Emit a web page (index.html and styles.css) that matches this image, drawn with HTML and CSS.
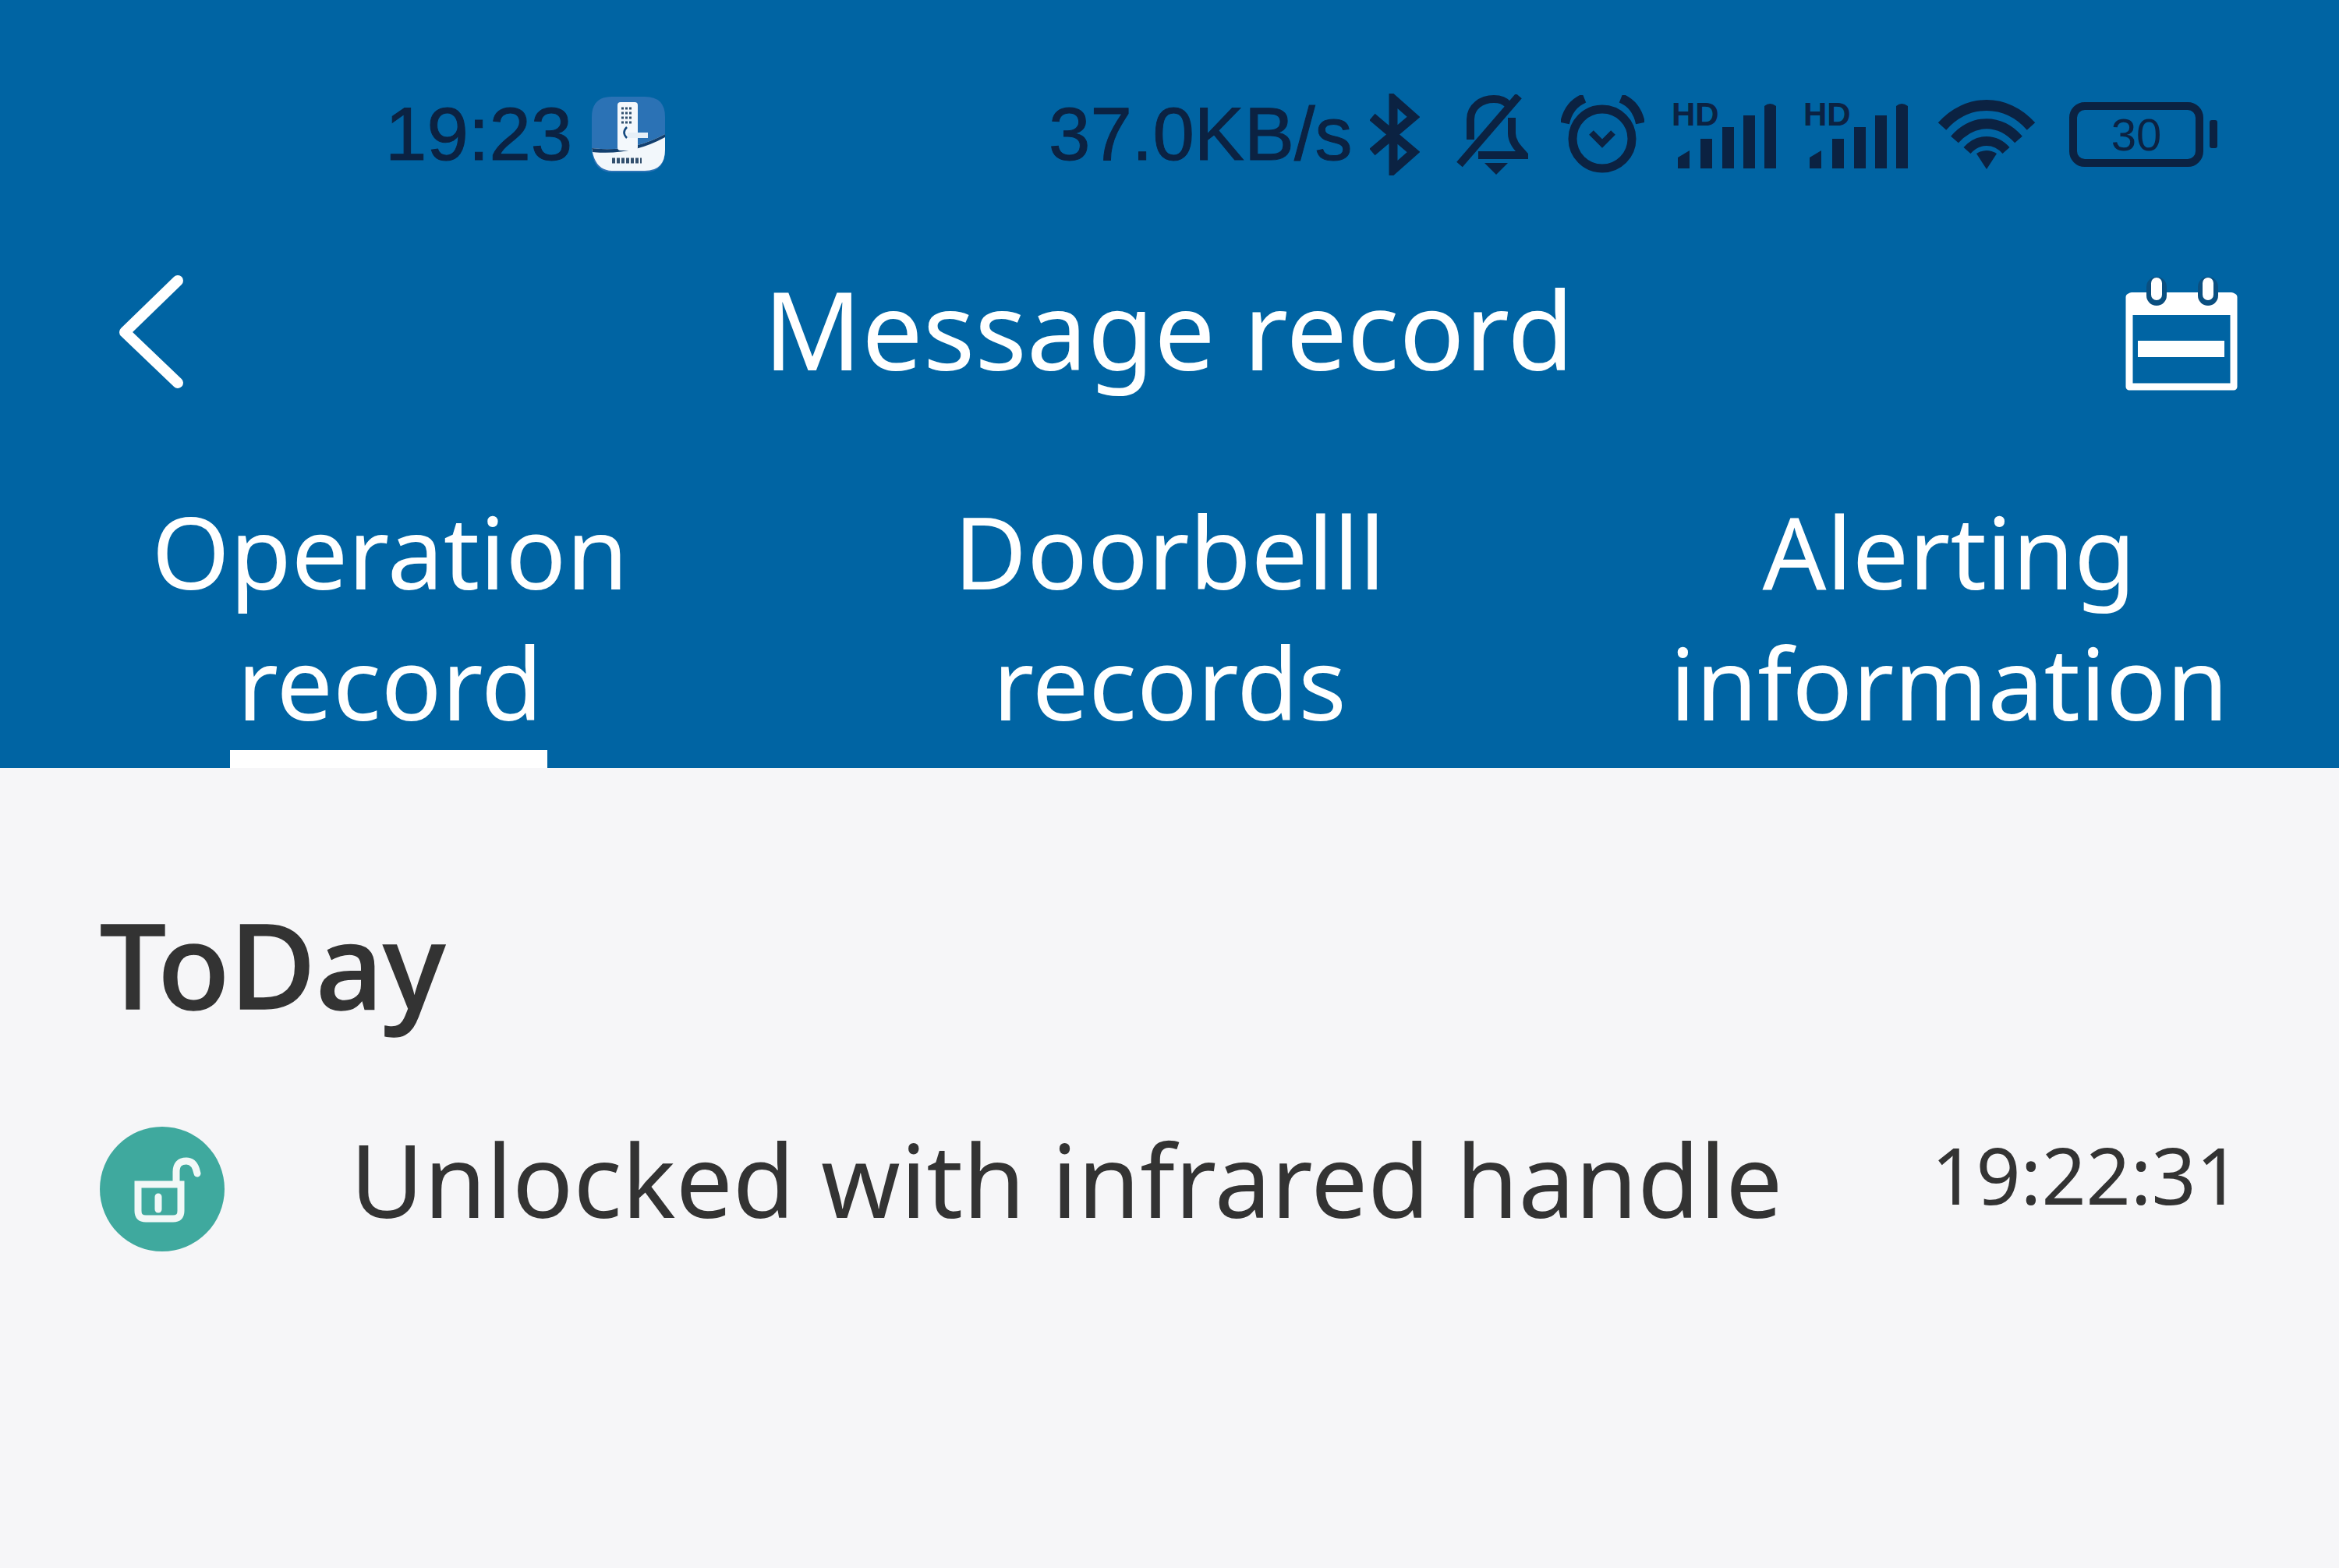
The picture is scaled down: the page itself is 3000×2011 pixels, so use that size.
FILE: index.html
```html
<!DOCTYPE html>
<html>

<head>
   <meta name="viewport" content="width=device-width, initial-scale=1.0">
   <title>Message record</title>
   <link rel="stylesheet" href="styles.css">
</head>

<body>
   <div class="top">
      <div class="status-bar">
         <span class="clock">19:23</span>
         <svg class="app-icon" viewBox="0 0 94 97">
            <path d="M26 0H68Q94 0 94 26V68Q94 97 68 97H26Q2 97 0 68V26Q0 0 26 0Z" fill="#2b72b5" />
            <path d="M0 66Q50 72 94 48V68Q94 95 68 95H26Q4 95 0 66Z" fill="#f2f7fb" />
            <path d="M0 66Q50 72 94 48V52Q50 76 1 71Z" fill="#123f6e" />
            <rect x="33" y="7" width="26" height="62" rx="4" fill="#f4f8fc" />
            <rect x="46" y="46" width="26" height="7" fill="#e6eff7" />
            <path d="M45 39Q38 46 45 53" fill="none" stroke="#154a80" stroke-width="2.5" />
            <path d="M38 15h14M38 21h14M38 27h14M38 33h14" stroke="#30506f" stroke-width="3" stroke-dasharray="3 2" />
            <path d="M26 82h38" stroke="#33506e" stroke-width="7" stroke-dasharray="4 2" />
         </svg>
         <span class="speed">37.0KB/s</span>
         <svg class="ic-bt" viewBox="0 0 64 105" fill="none" stroke="#0b2242" stroke-width="11">
            <path d="M3 30L56 75L30 98V7L56 30L3 75" />
         </svg>
         <svg class="ic-bell" viewBox="0 0 92 103" fill="none" stroke="#0b2242" stroke-width="10">
            <path d="M18 58V32C18 16 32 6 48 6C56 6 62 8 66 13" />
            <path d="M71 30V50C71 62 80 70 87 78H28" />
            <path d="M80 2L4 90" />
            <path d="M36 88H66L51 103Z" fill="#0b2242" stroke="none" />
         </svg>
         <svg class="ic-alarm" viewBox="0 0 107 100" fill="none" stroke="#0b2242" stroke-width="11">
            <circle cx="53" cy="56" r="38" />
            <path d="M30 4Q10 12 5 36" stroke-width="12" />
            <path d="M77 4Q97 12 102 36" stroke-width="12" />
            <path d="M39 48L53 62L67 48" stroke-width="8" />
         </svg>
         <svg class="ic-signal" viewBox="0 -10 134 109">
            <text x="0" y="33" class="hd">HD</text>
            <path d="M8 74L23 65V88H8Z M37 50H52V88H37Z M65 35H80V88H65Z M92 20H107V88H92Z M119 8Q126 2 134 8V88H119Z" fill="#0b2242" />
         </svg>
         <svg class="ic-signal sim2" viewBox="0 -10 134 109">
            <text x="0" y="33" class="hd">HD</text>
            <path d="M8 74L23 65V88H8Z M37 50H52V88H37Z M65 35H80V88H65Z M92 20H107V88H92Z M119 8Q126 2 134 8V88H119Z" fill="#0b2242" />
         </svg>
         <svg class="ic-wifi" viewBox="0 0 126 90" fill="none" stroke="#0b2242">
            <path d="M6 35C38 -1 88 -1 120 35" stroke-width="14" />
            <path d="M22 52C46 25 80 25 104 52" stroke-width="13" />
            <path d="M38 66C52 50 74 50 88 66" stroke-width="12" />
            <path d="M50 70Q63 62 76 70L63 90Z" fill="#0b2242" stroke="none" />
         </svg>
         <div class="battery">
            <span class="battery-level">30</span>
            <span class="battery-tip"></span>
         </div>
      </div>

      <div class="app-bar">
         <svg class="back" viewBox="0 0 82 145" fill="none" stroke="#fff" stroke-width="14" stroke-linecap="round" stroke-linejoin="round">
            <path d="M75 7L7 73L75 138" />
         </svg>
         <h1 class="title">Message record</h1>
         <svg class="calendar" viewBox="0 0 146 147">
            <path d="M6 26H140V141H6Z" fill="none" stroke="#fff" stroke-width="9" stroke-linejoin="round" />
            <rect x="3" y="20" width="140" height="29" rx="6" fill="#fff" />
            <rect x="17" y="82" width="111" height="21" fill="#fff" />
            <rect x="28" y="0" width="26" height="37" rx="13" fill="#0a4f80" />
            <rect x="94" y="0" width="26" height="37" rx="13" fill="#0a4f80" />
            <rect x="34" y="1" width="14" height="29" rx="7" fill="#fff" />
            <rect x="100" y="1" width="14" height="29" rx="7" fill="#fff" />
         </svg>
      </div>

      <div class="tabs">
         <div class="tab active">Operation<br>record</div>
         <div class="tab">Doorbelll<br>records</div>
         <div class="tab">Alerting<br>information</div>
      </div>
   </div>

   <div class="content">
      <h2 class="day">ToDay</h2>
      <div class="record">
         <svg class="record-icon" viewBox="0 0 160 160">
            <circle cx="80" cy="80" r="80" fill="#3fa99e" />
            <g fill="none" stroke="#f2f8f7" stroke-width="9" stroke-linecap="round">
               <path d="M49 74H104V108Q104 118 94 118H59Q49 118 49 108Z" />
               <path d="M98 72V58Q98 44 111 44Q122 44 125 60" />
               <path d="M75 90V106" />
            </g>
         </svg>
         <span class="record-text">Unlocked with infrared handle</span>
         <span class="record-time">19:22:31</span>
      </div>
   </div>
</body>

</html>
```

FILE: styles.css
```css
html,
body {
   margin: 0;
   height: 100%;
}

body {
   background-color: #f6f6f8;
   font-family: "Noto Sans", sans-serif;
   overflow: hidden;
}

.top {
   background-color: #0064a3;
   height: 985px;
}

/* Status bar */
.status-bar {
   display: flex;
   align-items: center;
   height: 344px;
   padding-left: 494px;
   color: #0b2242;
   font-family: "Liberation Sans", sans-serif;
   font-size: 96px;
   -webkit-text-stroke: 1px #0b2242;
}

.clock {
   width: 265px;
}

.app-icon {
   width: 94px;
   height: 97px;
}

.speed {
   width: 412px;
   margin-left: 492px;
   white-space: nowrap;
}

.ic-bt {
   width: 64px;
   height: 105px;
}

.ic-bell {
   width: 92px;
   height: 103px;
   margin-left: 47px;
}

.ic-alarm {
   width: 107px;
   height: 100px;
   margin-left: 42px;
}

.ic-signal {
   width: 134px;
   height: 109px;
   margin-left: 35px;
}

.hd {
   font-size: 42px;
   font-weight: bold;
   fill: #0b2242;
   stroke: none;
}

.ic-wifi {
   width: 126px;
   height: 90px;
   margin-left: 38px;
}

.battery {
   position: relative;
   box-sizing: border-box;
   width: 172px;
   height: 83px;
   margin-left: 43px;
   border: 10px solid #0b2242;
   border-radius: 20px;
   text-align: center;
}

.battery-level {
   font-size: 58px;
   line-height: 63px;
   display: block;
   -webkit-text-stroke: 0;
}

.battery-tip {
   position: absolute;
   top: 13px;
   right: -28px;
   width: 10px;
   height: 36px;
   background-color: #0b2242;
   border-radius: 3px;
}

/* Title bar */
.app-bar {
   display: grid;
   grid-template-columns: 1fr auto 1fr;
   align-items: center;
   height: 162px;
   padding: 0 129px 0 153px;
}

.back {
   width: 82px;
   height: 145px;
}

.title {
   margin: 0 26px 8px 0;
   color: white;
   font-size: 139px;
   font-weight: normal;
   line-height: 150px;
}

.calendar {
   justify-self: end;
   width: 146px;
   height: 147px;
   margin-top: 7px;
}

/* Tabs */
.tabs {
   display: grid;
   grid-template-columns: repeat(3, 1fr);
   padding-top: 117px;
}

.tab {
   position: relative;
   color: white;
   font-size: 128.5px;
   line-height: 168px;
   text-align: center;
}

.tab.active::after {
   content: "";
   position: absolute;
   left: 295px;
   top: 339px;
   width: 407px;
   height: 23px;
   background-color: white;
}

/* Records */
.content {
   padding: 0 126px 0 128px;
   color: #333;
}

.day {
   margin: 0;
   padding-top: 166px;
   font-size: 151px;
   font-weight: 500;
   line-height: 170px;
   -webkit-text-stroke: 1.5px #333;
}

.record {
   display: flex;
   align-items: center;
   margin-top: 103px;
}

.record-icon {
   flex-shrink: 0;
   width: 160px;
   height: 160px;
}

.record-text {
   margin: 0 0 26px 161px;
   font-size: 129.5px;
}

.record-time {
   margin: 0 0 38px auto;
   font-size: 100px;
}
```
